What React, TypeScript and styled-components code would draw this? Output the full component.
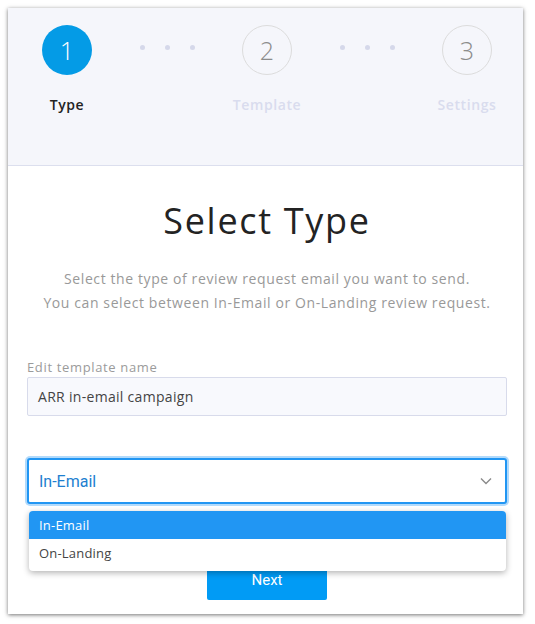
import React from "react";
import styled, { createGlobalStyle, css } from "styled-components";

const Global = createGlobalStyle`
  html, body { margin: 0; padding: 0; background: #ffffff; }
  * { box-sizing: border-box; }
`;

const SANS = `"Open Sans", "Noto Sans", "Liberation Sans", sans-serif`;
const ROBOTO = `Roboto, "Liberation Sans", sans-serif`;

const Card = styled.div`
  margin: 8px;
  width: 515px;
  height: 606px;
  background: #ffffff;
  box-shadow: 0 1px 4px rgba(0, 0, 0, 0.55);
  display: flex;
  flex-direction: column;
  font-family: ${SANS};
`;

const Header = styled.div`
  height: 158px;
  flex-shrink: 0;
  background: #f5f6fb;
  border-bottom: 1px solid #dcdfee;
  display: flex;
  align-items: flex-start;
  padding: 17px 6px 0 9px;
`;

const Step = styled.div`
  width: 100px;
  display: flex;
  flex-direction: column;
  align-items: center;
`;

const Circle = styled.div<{ $active?: boolean }>`
  width: 50px;
  height: 50px;
  border-radius: 50%;
  display: flex;
  align-items: center;
  justify-content: center;
  font-size: 25px;
  font-weight: 300;
  ${(p) =>
    p.$active
      ? css`
          background: #049be6;
          color: #ffffff;
        `
      : css`
          border: 1px solid #dcdcdc;
          color: #8c8c8c;
        `}
`;

const StepLabel = styled.div<{ $active?: boolean }>`
  margin-top: 20px;
  font-size: 14px;
  line-height: 20px;
  font-weight: 600;
  letter-spacing: 0.6px;
  white-space: nowrap;
  color: ${(p) => (p.$active ? "#232323" : "#d9dcee")};
`;

const Dots = styled.div`
  width: 100px;
  display: flex;
  justify-content: center;
  gap: 20px;
  margin-top: 20px;
`;

const Dot = styled.span`
  width: 5px;
  height: 5px;
  border-radius: 50%;
  background: #d5d8ea;
`;

const Body = styled.div`
  display: flex;
  flex-direction: column;
  padding: 0 16px 0 19px;
`;

const Title = styled.h1`
  margin: 33px 0 0;
  text-align: center;
  font-size: 36px;
  line-height: 44px;
  font-weight: 400;
  color: #232323;
  letter-spacing: 1.7px;
`;

const Desc = styled.p`
  margin: 24px 0 0;
  text-align: center;
  font-size: 14px;
  line-height: 24px;
  letter-spacing: 0.6px;
  color: #999999;
`;

const FieldLabel = styled.label`
  margin-top: 43px;
  font-size: 13px;
  line-height: 18px;
  letter-spacing: 0.65px;
  color: #9b9b9b;
`;

const Input = styled.div`
  margin-top: 1px;
  height: 39px;
  background: #f8f9fd;
  border: 1px solid #d8dbeb;
  border-radius: 2px;
  display: flex;
  align-items: center;
  padding: 0 10px;
  font-size: 14px;
  letter-spacing: 0.3px;
  color: #444444;
`;

const SelectWrap = styled.div`
  position: relative;
  margin-top: 42px;
`;

const SelectBox = styled.div`
  height: 46px;
  border: 2px solid #2196f3;
  border-radius: 3px;
  box-shadow: 0 0 0 2px rgba(33, 150, 243, 0.35);
  background: #ffffff;
  display: flex;
  align-items: center;
  justify-content: space-between;
  padding: 0 12px 0 10px;
  font-family: ${ROBOTO};
  font-size: 16px;
  color: #1e7fd0;
`;

const Menu = styled.div`
  position: absolute;
  top: calc(100% + 7px);
  left: 2px;
  right: 1px;
  background: #ffffff;
  border-radius: 4px;
  box-shadow: 0 2px 6px rgba(0, 0, 0, 0.3);
  padding-bottom: 4px;
  overflow: hidden;
  z-index: 2;
`;

const Option = styled.div<{ $selected?: boolean }>`
  height: 28px;
  display: flex;
  align-items: center;
  padding: 0 10px;
  font-size: 13px;
  letter-spacing: 0.2px;
  ${(p) =>
    p.$selected
      ? css`
          background: #2196f3;
          color: #ffffff;
        `
      : css`
          color: #444444;
        `}
`;

const NextButton = styled.button`
  align-self: center;
  margin-top: 60px;
  width: 120px;
  height: 36px;
  padding: 0 0 4px;
  border: none;
  border-radius: 2px;
  background: #019bf5;
  color: #ffffff;
  font-family: ${ROBOTO};
  font-size: 15px;
  cursor: pointer;
`;

const Chevron = () => (
  <svg width="14" height="14" viewBox="0 0 14 14" fill="none">
    <path d="M2 4.5 L7 9.5 L12 4.5" stroke="#8a8a8a" strokeWidth="1.4" />
  </svg>
);

export default function App() {
  return (
    <>
      <Global />
      <Card>
        <Header>
          <Step>
            <Circle $active>1</Circle>
            <StepLabel $active>Type</StepLabel>
          </Step>
          <Dots>
            <Dot />
            <Dot />
            <Dot />
          </Dots>
          <Step>
            <Circle>2</Circle>
            <StepLabel>Template</StepLabel>
          </Step>
          <Dots>
            <Dot />
            <Dot />
            <Dot />
          </Dots>
          <Step>
            <Circle>3</Circle>
            <StepLabel>Settings</StepLabel>
          </Step>
        </Header>
        <Body>
          <Title>Select Type</Title>
          <Desc>
            Select the type of review request email you want to send.
            <br />
            You can select between In-Email or On-Landing review request.
          </Desc>
          <FieldLabel>Edit template name</FieldLabel>
          <Input>ARR in-email campaign</Input>
          <SelectWrap>
            <SelectBox>
              <span>In-Email</span>
              <Chevron />
            </SelectBox>
            <Menu>
              <Option $selected>In-Email</Option>
              <Option>On-Landing</Option>
            </Menu>
          </SelectWrap>
          <NextButton>Next</NextButton>
        </Body>
      </Card>
    </>
  );
}
